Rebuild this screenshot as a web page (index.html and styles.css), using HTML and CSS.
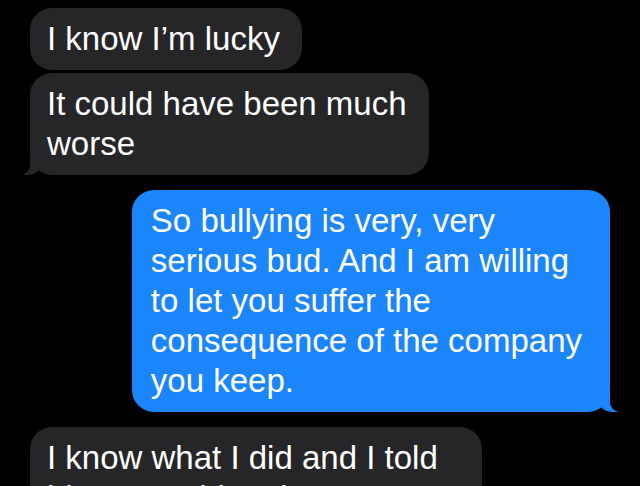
FILE: index.html
```html
<!DOCTYPE html>
<html>
  <head>
    <title>Messages</title>
    <link rel="stylesheet" href="styles.css">
  </head>
  <body>
    <div class="thread">
      <div class="group them">
        <div class="bubble">I know I’m lucky</div>
        <div class="bubble tail">It could have been much<br>worse</div>
      </div>

      <div class="group me">
        <div class="bubble tail">So bullying is very, very<br>serious bud. And I am willing<br>to let you suffer the<br>consequence of the company<br>you keep.</div>
      </div>

      <div class="group them">
        <div class="bubble">I know what I did and I told<br>him everything that went on.</div>
      </div>
    </div>
  </body>
</html>
```

FILE: styles.css
```css
body {
  margin: 0;
  background: #000;
  font-family: "Liberation Sans", Arial, sans-serif;
  color: #fff;
  overflow: hidden;
}
.thread {
  display: flex;
  flex-direction: column;
  gap: 15px;
  padding: 8px 30px;
}
.group {
  display: flex;
  flex-direction: column;
  gap: 3px;
}
.group.them {
  align-items: flex-start;
}
.group.me {
  align-items: flex-end;
}
.bubble {
  position: relative;
  font-size: 33px;
  line-height: 40px;
  padding: 11px 22px 11px 17px;
  border-radius: 22px;
  white-space: nowrap;
}
.them .bubble {
  background: #262629;
}
.me .bubble {
  background: #1b85fb;
  padding: 11px 28px 11px 19px;
}

/* little tails on the last bubble of a group */
.bubble.tail::before,
.bubble.tail::after {
  content: "";
  position: absolute;
  bottom: 0;
  height: 20px;
}
.them .bubble.tail::before {
  left: -7px;
  width: 20px;
  background: #262629;
  border-bottom-right-radius: 15px;
}
.them .bubble.tail::after {
  left: -26px;
  width: 26px;
  background: #000;
  border-bottom-right-radius: 10px;
}
.me .bubble.tail::before {
  right: -7px;
  width: 20px;
  background: #1b85fb;
  border-bottom-left-radius: 15px;
}
.me .bubble.tail::after {
  right: -26px;
  width: 26px;
  background: #000;
  border-bottom-left-radius: 10px;
}
```
